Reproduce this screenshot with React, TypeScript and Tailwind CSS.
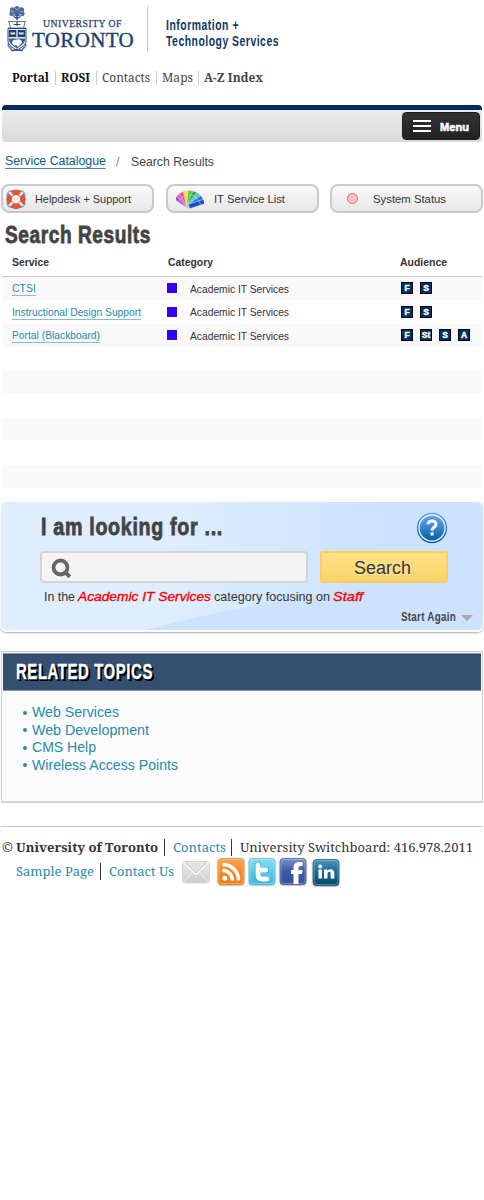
import { useLayoutEffect, useRef, type ReactNode } from "react";

const SANS = "font-['Liberation_Sans',sans-serif]";
const NARROW = "font-['Liberation_Sans_Narrow','Liberation_Sans',sans-serif]";
const SLAB = "font-['Noto_Serif','DejaVu_Serif_Condensed','DejaVu_Serif',serif]";

/* Single line of text condensed or expanded to an exact width. */
function Fit({ w, className = "", children }: { w: number; className?: string; children: ReactNode }) {
  const ref = useRef<HTMLSpanElement>(null);
  useLayoutEffect(() => {
    const el = ref.current;
    if (el && el.offsetWidth) {
      el.style.transform = `scaleX(${w / el.getBoundingClientRect().width})`;
    }
  }, [w]);
  return (
    <span className={`block shrink-0 whitespace-nowrap ${className}`} style={{ width: w }}>
      <span ref={ref} className="inline-block origin-left">{children}</span>
    </span>
  );
}

function Crest() {
  return (
    <svg className="ml-[7px] mt-[6px] h-[46px] w-5 shrink-0" viewBox="0 0 20 46" fill="none" stroke="#244a7c">
      <g fill="#4c6c96" stroke="none">
        <circle cx="10" cy="2.600" r="2.600" /><circle cx="5.600" cy="4" r="2.700" /><circle cx="14.400" cy="4" r="2.700" />
        <circle cx="5" cy="7.600" r="2.600" /><circle cx="15" cy="7.600" r="2.600" /><circle cx="10" cy="7" r="3.500" />
      </g>
      <path d="M4 5l3 1m1-4 2 2 2-2m1 4 3-1M5 9l3-1m4 0 3 1" stroke="#b5c4d8" strokeWidth=".7" />
      <path d="M10 8v6M6.500 10.500l3.500 2 3.500-2" strokeWidth="1.300" />
      <path d="M1 15.500h18M2 16l1.500 6M18 16l-1.500 6M1 22h18" stroke="#5a779d" strokeWidth="1" />
      <path d="M6.500 18.500h7M10 16v4" strokeWidth="1.200" />
      <path d="M1 22.500h18V35c0 4.500-4 6-9 9.500-5-3.500-9-5-9-9.500z" fill="#e4eaf2" strokeWidth="1" />
      <path d="M2 24h7.300v7H2zM10.700 24H18v7h-7.300z" fill="#1b4072" stroke="none" />
      <path d="M3.500 26l2.200.7L8 26v2.500H3.500zM12 26l2.200.7 2.300-.7v2.500H12z" fill="#dce5ef" stroke="none" />
      <path d="M2 32.500h16c0 5-3 6.500-8 10-5-3.500-8-5-8-10z" fill="#3d5f8c" stroke="none" />
      <path d="M5 37c0-3 3-3.500 5-3.500 2-.5 4.500.5 5 2.500l-1 2.500h-1.500l-.5 2h-2l-.5-1.500-2.500.5z" fill="#fff" stroke="none" />
      <path d="M1 38c0 4 3 3 4 6.500l5-1 5 1c1-3.500 4-2.500 4-6.500" stroke="#4c6c96" strokeWidth="1.400" />
      <path d="M5 45l5-1.500 5 1.500" strokeWidth="1.200" />
    </svg>
  );
}

function LifeRing() {
  return (
    <svg className="ml-[2px] size-[22px] shrink-0" viewBox="0 0 22 22" fill="none">
      <circle cx="11" cy="11.500" r="7" stroke="#9f3524" strokeWidth="5" />
      <circle cx="11" cy="11" r="7" stroke="#e2553d" strokeWidth="5" />
      <g stroke="#f4f4f4" strokeWidth="2.400">
        <path d="M4.300 4.300l3.300 3.300M14.400 14.400l3.300 3.300M17.700 4.300l-3.300 3.300M7.600 14.400l-3.300 3.300" />
      </g>
      <g stroke="#6aa5c0" strokeWidth="1.300" strokeLinecap="round">
        <path d="M2 7.500Q2.500 3.500 6 2.500M16 2.500q3.500 1 4 5M20 15q-.5 3.500-4 4.500M6 19.500Q2.500 18.500 2 15" />
      </g>
    </svg>
  );
}

const FAN = [
  { a: -56, c: "#a64bd1" }, { a: -42, c: "#cf5ee0" }, { a: -28, c: "#ef4f7c" },
  { a: -12, c: "#f0e13a" }, { a: 5, c: "#4ccc3d" }, { a: 22, c: "#35ad46" },
  { a: 38, c: "#54c7df" }, { a: 55, c: "#2872d8" }, { a: 72, c: "#174fc0" },
];

function Swatches() {
  return (
    <svg className="ml-2 h-[21px] w-[28px] shrink-0" viewBox="0 0 28 21">
      {FAN.map((f) => (
        <g key={f.a} transform={`rotate(${f.a} 13 18.500)`}>
          <rect x="10.700" y="2.500" width="4.600" height="16" rx=".6" fill={f.c} stroke="#e8e8e8" strokeWidth=".5" />
          <path d="M11 7h4" stroke="#fff" strokeWidth=".5" opacity=".7" />
        </g>
      ))}
    </svg>
  );
}

function TopButton({ children }: { children: ReactNode }) {
  return (
    <button className="flex h-[29px] w-[153px] shrink-0 items-center rounded-[8px] border-2 border-[#c9c9c9] bg-linear-to-b from-[#fafafa] to-[#e7e7e7] text-[11.500px] leading-[25px] text-[#333]">
      {children}
    </button>
  );
}

function Badge({ label }: { label: string }) {
  return (
    <span className="flex size-[12px] shrink-0 items-center justify-center border border-black bg-[#003064] text-[8.500px] leading-[10px] font-bold text-white [-webkit-text-stroke:0.400px_white]">
      {label}
    </span>
  );
}

const ROWS = [
  { name: "CTSI", w: 24, audience: ["F", "S"], row: "h-[23px]", lift: "mt-px" },
  { name: "Instructional Design Support", w: 129, audience: ["F", "S"], row: "h-[24px]", lift: "mt-px" },
  { name: "Portal (Blackboard)", w: 88, audience: ["F", "St", "S", "A"], row: "h-[23px]", lift: "" },
];

function ServiceTable() {
  return (
    <section className="ml-[2px] mt-[3px] w-[480px] text-[#333]">
      <div className="flex h-[28px] border-b border-[#c9c9c9] text-[11px] leading-[26px] font-bold">
        <Fit w={37} className="ml-[10px]">Service</Fit>
        <Fit w={45} className="ml-[119px]">Category</Fit>
        <Fit w={47} className="ml-[187px]">Audience</Fit>
      </div>
      {ROWS.map((r, i) => (
        <div key={r.name} className={`flex items-center text-[11px] ${r.row} ${i % 2 ? "" : "bg-[#f9f9f9]"}`}>
          <div className="w-[165px] pl-[10px]">
            <a className={`block h-[14px] border-b border-[#84bdcd] leading-[13px] text-[#268ca9] ${r.lift}`} style={{ width: r.w }}>
              <Fit w={r.w}>{r.name}</Fit>
            </a>
          </div>
          <span className="-mt-px size-[10px] bg-[#3300ff]" />
          <Fit w={99} className="ml-[13px] mt-[1.500px] leading-[13px]">Academic IT Services</Fit>
          <div className="-mt-px ml-[112px] flex gap-[7px]">
            {r.audience.map((a) => <Badge key={a} label={a} />)}
          </div>
        </div>
      ))}
      <div className="mt-[24px] h-[22px] bg-[#f9f9f9]" />
      <div className="mt-[25px] h-[22px] bg-[#f9f9f9]" />
      <div className="mt-[25px] h-[23px] bg-[#f9f9f9]" />
    </section>
  );
}

function HelpIcon() {
  return (
    <svg className="ml-[193px] mt-[10px] size-[32px] shrink-0" viewBox="0 0 32 32">
      <defs>
        <linearGradient id="help" x1="0" y1="0" x2="0" y2="1">
          <stop offset="0" stopColor="#62a9e4" /><stop offset=".5" stopColor="#3584ce" /><stop offset="1" stopColor="#0b58a5" />
        </linearGradient>
      </defs>
      <circle cx="16" cy="16" r="15.200" fill="url(#help)" />
      <circle cx="16" cy="16" r="13" fill="url(#help)" stroke="#e9f4ff" strokeWidth="1.300" />
      <path d="M12 12.300c.2-4.600 8.300-4.400 8 .1-.2 2.900-3.900 2.900-3.900 6" fill="none" stroke="#fff" strokeWidth="3" />
      <rect x="14.500" y="20.200" width="3.200" height="3.200" rx=".6" fill="#fff" />
    </svg>
  );
}

function SearchPanel() {
  return (
    <section className="relative mt-[12px] h-[132px] w-[484px] overflow-hidden rounded-[7px] border-2 border-[#fbfcfd] border-x-[1px] bg-linear-to-r from-[#deeeff] from-35% to-[#cce2ff] to-80% shadow-[0_1px_2px_#aaa]">
      <svg className="absolute inset-0 size-full" viewBox="0 0 482 128" preserveAspectRatio="none">
        <path d="M144 128Q280 92 482 72V128z" fill="#cce2ff" />
      </svg>
      <div className="relative">
        <div className="flex h-[49px] pr-4">
          <Fit w={182} className={`ml-[40px] ${NARROW} mt-[8px] text-[23px] leading-[35px] font-bold tracking-[.8px] text-[#444] [-webkit-text-stroke:0.800px_#444]`}>I am looking for ...</Fit>
          <HelpIcon />
        </div>
        <div className="flex">
          <div className="ml-[39px] flex h-[32px] w-[268px] items-center rounded-[4px] border-2 border-[#d3d3d3] bg-[#f4f4f4] pl-[9px]">
            <svg className="mt-[3px] size-[22px]" viewBox="0 0 22 22" fill="none" stroke="#666">
              <circle cx="9.500" cy="9.500" r="7" strokeWidth="3.800" /><path d="M14 14l4.800 4.800" strokeWidth="4" />
            </svg>
          </div>
          <button className="ml-[12px] flex h-[32px] w-[128px] items-center justify-center rounded-[3px] border-2 border-[#ffcb62] bg-linear-to-b from-[#ffe287] to-[#f9d568] pr-[4px] text-[18px] text-[#333] [text-shadow:1px_1px_1px_#fff7]">
            <Fit w={57} className="mt-px leading-[28px]">Search</Fit>
          </button>
        </div>
        <div className="mt-[7px] flex text-[13px] leading-[14px] text-[#333]">
          <Fit w={31} className="ml-[43px]">In the</Fit>
          <Fit w={133} className="ml-[3px] text-[#f00] italic [-webkit-text-stroke:0.350px_#f00]">Academic IT Services</Fit>
          <Fit w={116} className="ml-[3px]">category focusing on</Fit>
          <Fit w={30} className="ml-[3px] text-[#f00] italic [-webkit-text-stroke:0.350px_#f00]">Staff</Fit>
        </div>
        <div className={`mt-[5px] flex ${NARROW} text-[12px] leading-[16px] font-bold text-[#444]`}>
          <Fit w={55} className="ml-[400px] tracking-[.3px]">Start Again</Fit>
          <svg className="ml-[5px] mt-[6px] h-[6px] w-[12px]" viewBox="0 0 12 6"><path d="M0 0h12L6 6z" fill="#aaa" /></svg>
        </div>
      </div>
    </section>
  );
}

const TOPICS = [
  { t: "Web Services", w: 87 }, { t: "Web Development", w: 117 },
  { t: "CMS Help", w: 64 }, { t: "Wireless Access Points", w: 146 },
];

function RelatedTopics() {
  return (
    <section className="ml-px mt-[19px] h-[152px] w-[482px] border border-[#cdcdcd] border-b-2 border-b-[#d4d4d4] bg-[#fbfbfb] pt-px">
      <div className="ml-px flex h-[38px] w-[478px] border border-[#8494ab] border-x-0 bg-[#344f70]">
        <Fit w={137} className={`ml-[13px] ${NARROW} text-[21.500px] leading-[36px] font-bold tracking-[.8px] text-white [text-shadow:1px_1px_0_#000,2px_2px_0_#000,3px_2px_0_#000] [-webkit-text-stroke:0.300px_white]`}>RELATED TOPICS</Fit>
      </div>
      <ul className="pt-[13px] text-[14px] leading-[17.500px] text-[#268ca9]">
        {TOPICS.map((x) => (
          <li key={x.t} className="flex items-center">
            <span className="ml-[21px] size-[4px] rounded-full bg-[#268ca9]" />
            <Fit w={x.w} className="ml-[5px]">{x.t}</Fit>
          </li>
        ))}
      </ul>
    </section>
  );
}

function Envelope() {
  return (
    <svg className="ml-[8px] h-[30px] w-[28px]" viewBox="0 0 28 30">
      <defs><linearGradient id="env" x1="0" y1="0" x2="0" y2="1"><stop stopColor="#ececec" /><stop offset="1" stopColor="#cdcdcd" /></linearGradient></defs>
      <rect x=".5" y="4.500" width="27" height="21.500" rx="2.500" fill="url(#env)" stroke="#d6d6d6" />
      <path d="M1.500 25l9-9.500M26.500 25l-9-9.500" stroke="#efefef" strokeWidth="1" />
      <path d="M2 5.500l10.500 10.500q1.500 1.500 3 0L26 5.500" fill="#e3e3e3" stroke="#fff" strokeWidth="1.500" />
      <path d="M2.500 5l10.200 10q1.300 1.200 2.600 0L25.500 5" fill="none" stroke="#bdbdbd" strokeWidth=".8" />
    </svg>
  );
}

const TONES: Record<string, [string, string, string]> = {
  rss: ["#f7a553", "#f68a25", "#ee7a12"],
  tw: ["#8bdcf1", "#55cbea", "#3cb8de"],
  fb: ["#7a93cb", "#3d59a6", "#35509c"],
  li: ["#4a93b8", "#176b95", "#064768"],
};

function Social({ kind, className }: { kind: string; className: string }) {
  const [a, b, c] = TONES[kind];
  return (
    <svg className={`h-[30px] w-[30px] shrink-0 ${className}`} viewBox="0 0 30 30">
      <defs><linearGradient id={kind} x1="0" y1="0" x2="0" y2="1"><stop stopColor={a} /><stop offset=".5" stopColor={b} /><stop offset="1" stopColor={c} /></linearGradient></defs>
      <rect width="30" height="30" fill="#f6f6f6" />
      <rect x="1.500" y="1.500" width="27" height="27.500" rx="4" fill="#999" opacity=".5" />
      <rect x="2" y="1.500" width="26" height="26" rx="3.500" fill={`url(#${kind})`} stroke={c} strokeOpacity=".6" />
      <rect x="3" y="2.500" width="24" height="24" rx="3" fill="none" stroke="#fff" strokeOpacity=".3" />
      {kind === "rss" && (
        <g fill="none" stroke="#fff" strokeWidth="3.600">
          <path d="M6.500 7.500c9.500 0 16 7 16 16M6.500 13.500c5.500 0 10 4.500 10 10" />
          <circle cx="8.800" cy="21.200" r="2.500" fill="#fff" stroke="none" />
        </g>
      )}
      {kind === "tw" && (
        <g fill="none" strokeLinecap="round" strokeLinejoin="round">
          <path d="M11 8v9.500q0 4.500 4.500 4.500H20M11 13h8" stroke="#37a9cc" strokeWidth="6" />
          <path d="M11 8v9.500q0 4.500 4.500 4.500H20M11 13h8" stroke="#fff" strokeWidth="4.800" />
        </g>
      )}
      {kind === "fb" && (
        <path d="M15.500 27V17H13v-4h2.500v-2.500C15.500 6.500 18 4.500 24.500 5v4c-3-.2-4 .2-4 2v2h4l-.5 4h-3.500v10z" fill="#fff" />
      )}
      {kind === "li" && (
        <g fill="#fff">
          <circle cx="9.200" cy="8.500" r="2" /><rect x="7.500" y="11.500" width="3.500" height="9" />
          <path d="M13 11.500h3.400v1.200c2-2.500 7-2 7 2.800v5h-3.700v-4.700c0-2.800-3.200-2.400-3.200 0v4.700H13z" />
        </g>
      )}
    </svg>
  );
}

export default function App() {
  return (
    <div className={`h-[1200px] w-[484px] overflow-hidden bg-white ${SANS}`}>
      <header className="flex h-[60px] text-[#0e3568]">
        <Crest />
        <div className="ml-[5px] w-[103px] font-['Liberation_Serif',serif] text-[#1b4072]">
          <Fit w={79} className="ml-[11px] mt-[18px] text-[10px] leading-[12px] tracking-[.5px] [-webkit-text-stroke:0.250px_#1b4072]">UNIVERSITY OF</Fit>
          <Fit w={102} className="text-[20px] leading-[20px] tracking-[.3px] [-webkit-text-stroke:0.350px_#1b4072]">TORONTO</Fit>
        </div>
        <span className="ml-[12px] mt-[6px] h-[45px] w-px bg-[#c8c8c8]" />
        <div className={`ml-[18px] mt-[17px] ${NARROW} text-[14px] leading-[16px] font-bold tracking-[.7px]`}>
          <Fit w={73}>Information +</Fit>
          <Fit w={113}>Technology Services</Fit>
        </div>
      </header>
      <nav className={`mt-[9px] flex h-[17px] ${SLAB} text-[12px] leading-[17px] text-[#444]`}>
        <Fit w={37} className="ml-[12px] font-bold text-[#111]">Portal</Fit>
        <span className="ml-[6px] h-[14px] mt-[2px] w-px bg-[#ccc]" />
        <Fit w={29} className="ml-[5px] font-bold text-[#111]">ROSI</Fit>
        <span className="ml-[6px] h-[14px] mt-[2px] w-px bg-[#ccc]" />
        <Fit w={48} className="ml-[5px]">Contacts</Fit>
        <span className="ml-[6px] h-[14px] mt-[2px] w-px bg-[#ccc]" />
        <Fit w={31} className="ml-[5px]">Maps</Fit>
        <span className="ml-[5px] h-[14px] mt-[2px] w-px bg-[#ccc]" />
        <Fit w={59} className="ml-[5px] font-bold">A-Z Index</Fit>
      </nav>
      <div className="ml-[2px] mt-[19px] flex h-[37px] w-[480px] justify-end rounded-[4px] border-t-[5px] border-[#002b60] bg-linear-to-b from-[#ebebeb] to-[#dadada] pt-[2px] pr-[2px]">
        <button className="flex h-[28px] w-[78px] items-center rounded-[4px] border border-[#1b1b1b] bg-linear-to-b from-[#333] to-[#222] text-white">
          <span className="ml-[10px] flex w-[18px] flex-col gap-[3px]">
            <span className="h-[2px] bg-white" /><span className="h-[2px] bg-white" /><span className="h-[2px] bg-white" />
          </span>
          <Fit w={29} className="ml-[8px] mt-[2px] text-[10.500px] leading-[14px] font-bold [-webkit-text-stroke:0.500px_white]">Menu</Fit>
        </button>
      </div>
      <div className="mt-[12px] flex h-[30px] text-[12.500px] text-[#444]">
        <a className="ml-[5px] block h-[15px] border-b border-[#4a86a6] leading-[14px] text-[#0b5b86]"><Fit w={101}>Service Catalogue</Fit></a>
        <span className="ml-[10px] mt-px w-[4px] leading-[15px] text-[#888]">/</span>
        <Fit w={83} className="ml-[11px] mt-px leading-[15px]">Search Results</Fit>
      </div>
      <div className="ml-px flex gap-[11.500px]">
        <TopButton><LifeRing /><Fit w={96} className="ml-[8px] mt-px">Helpdesk + Support</Fit></TopButton>
        <TopButton><Swatches /><Fit w={71} className="ml-[10px] mt-px">IT Service List</Fit></TopButton>
        <TopButton><span className="ml-[15px] size-[11px] rounded-full border border-[#f2625c] bg-[#fcc5c5]" /><Fit w={73} className="ml-[15px] mt-px">System Status</Fit></TopButton>
      </div>
      <h1 className={`mt-[7px] h-[26px] ${NARROW} text-[23px] leading-[30px] font-bold tracking-[.7px] text-[#444] [-webkit-text-stroke:0.800px_#444]`}>
        <Fit w={146} className="ml-[5px]">Search Results</Fit>
      </h1>
      <ServiceTable />
      <SearchPanel />
      <RelatedTopics />
      <footer className={`ml-px mt-[23px] w-[482px] border-t border-[#c9c9c9] pt-[12px] ${SLAB} text-[13.300px] leading-[17px] text-[#333]`}>
        <div className="flex h-[18px]">
          <Fit w={11} className="ml-px">©</Fit>
          <Fit w={142} className="ml-[3px] font-bold">University of Toronto</Fit>
          <span className="ml-[6px] h-[17px] w-px bg-[#333]" />
          <Fit w={53} className="ml-[8px] text-[#268ca9]">Contacts</Fit>
          <span className="ml-[5px] h-[17px] w-px bg-[#333]" />
          <Fit w={233} className="ml-[8px]">University Switchboard: 416.978.2011</Fit>
        </div>
        <div className="flex h-[32px]">
          <Fit w={78} className="ml-[15px] mt-[6px] text-[#268ca9]">Sample Page</Fit>
          <span className="ml-[6px] mt-[6px] h-[17px] w-px bg-[#333]" />
          <Fit w={65} className="ml-[8px] mt-[6px] text-[#268ca9]">Contact Us</Fit>
          <Envelope />
          <Social kind="rss" className="ml-[6px]" />
          <Social kind="tw" className="ml-px" />
          <Social kind="fb" className="ml-px" />
          <Social kind="li" className="ml-[3px] mt-px" />
        </div>
      </footer>
    </div>
  );
}
